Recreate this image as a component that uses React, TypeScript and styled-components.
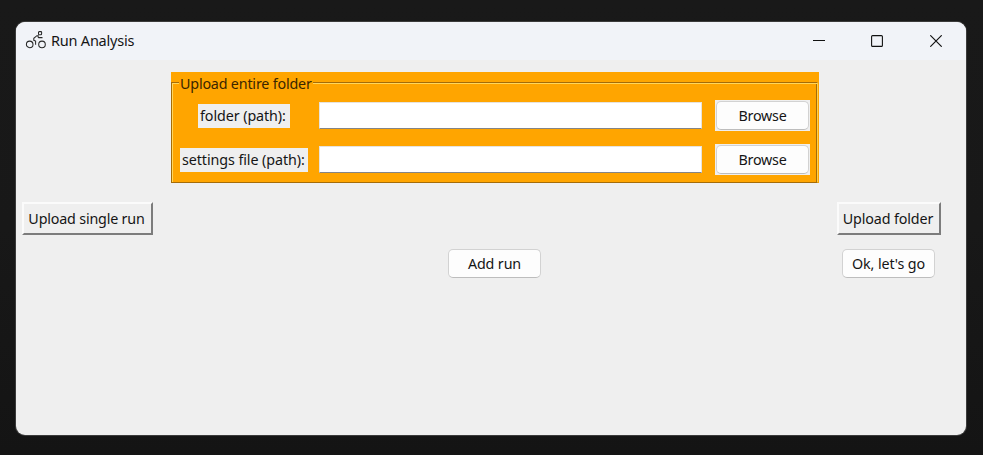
import React from "react";
import styled, { createGlobalStyle } from "styled-components";

const GlobalStyle = createGlobalStyle`
  * { box-sizing: border-box; }
  html, body { margin: 0; height: 100%; background: #181818; overflow: hidden; }
  body, button, input { font-family: "Noto Sans", "Open Sans", sans-serif; font-size: 14.3px; color: #151515; }
`;

const Desktop = styled.div`
  height: 455px;
  width: 983px;
  padding: 22px 17px 20px 16px;
  background: linear-gradient(#191919, #181818 50%, #141414);
`;

const Window = styled.main`
  height: 413px;
  border-radius: 9px;
  background: #efefef;
  overflow: hidden;
  box-shadow: 0 0 0 1px #3b3b3b;
`;

const TitleBar = styled.header`
  height: 38px;
  display: flex;
  align-items: center;
  padding-left: 9px;
  background: #f1f3f8;
`;

const Title = styled.h1`
  margin: 0 auto 2px 4px;
  font-size: 14.5px;
  font-weight: 400;
  line-height: 20px;
`;

const Caption = styled.span<{ $spacing?: number }>`
  display: block;
  white-space: nowrap;
  line-height: 20px;
  letter-spacing: ${(p) => p.$spacing ?? -0.12}px;
`;

const WindowControls = styled.div`
  display: flex;
  padding-right: 18px;
`;

const ControlButton = styled.button<{ $gap?: number }>`
  width: 24px;
  height: 24px;
  margin-right: ${(p) => p.$gap ?? 0}px;
  padding: 0;
  border: 0;
  background: none;
  display: grid;
  place-items: center;
  svg { display: block; }
`;

const Content = styled.div`
  display: grid;
  grid-template-columns: 155px 648px 147px;
  grid-template-rows: 111px 33px 29px;
  padding-top: 12px;
  row-gap: 19px;
`;

const FolderGroup = styled.fieldset`
  grid-column: 2;
  position: relative;
  margin: 0;
  min-width: 0;
  padding: 28px 0 0 9px;
  border: 0;
  background: #ffa500;
  display: grid;
  grid-template-columns: 128px 383px 95px;
  grid-template-rows: 31px 31px;
  column-gap: 12px;
  row-gap: 13px;
  align-items: center;
`;

const Groove = styled.div`
  position: absolute;
  inset: 10px 1px 0 0;
  border: 1px solid #a56c08;
  border-right-color: #ffcf48;
  box-shadow: inset 1px 1px #ffd65c, inset -1px 0 #a56c08;
`;

const GroupTitle = styled.div`
  position: absolute;
  left: 8px;
  top: 2px;
  padding: 0 1px;
  color: #3a2500;
  background: #ffa500;
`;

const FieldLabel = styled.label<{ $width: number }>`
  justify-self: center;
  width: ${(p) => p.$width}px;
  height: 24px;
  padding: 2px 0 2px 2px;
  background: #efefef;
`;

const PathInput = styled.input`
  width: 383px;
  height: 27px;
  margin-left: -1px;
  padding: 2px 4px;
  border: 1px solid #e6e3de;
  border-bottom: 1px solid #858585;
  border-radius: 0;
  background: #fff;
  outline: 0;
`;

const ButtonBacking = styled.div`
  height: 31px;
  padding: 1px;
  background: #efefef;
`;

const RoundButton = styled.button<{ $shift?: number }>`
  width: 93px;
  height: 29px;
  padding: 0;
  border: 1px solid #d2d2d2;
  border-bottom-color: #bdbdbd;
  border-radius: 5px;
  background: #fdfdfd;
  display: grid;
  place-items: center;
  margin-left: ${(p) => p.$shift ?? 0}px;
`;

const RaisedButton = styled.button<{ $width: number; $left: number; $column: number }>`
  grid-row: 2;
  grid-column: ${(p) => p.$column};
  width: ${(p) => p.$width}px;
  margin-left: ${(p) => p.$left}px;
  padding: 0 2px 0 0;
  border: 2px solid;
  border-color: #fbfbfb #7c7c7c #7c7c7c #fbfbfb;
  background: #efefef;
  display: grid;
  place-items: center;
`;

const Actions = styled.div`
  grid-row: 3;
  grid-column: 2 / 4;
  display: flex;
  margin-top: -5px;
`;

const CyclistIcon = () => (
  <svg width="22" height="20" viewBox="0 0 22 20" fill="none" stroke="#292929" strokeWidth="1.05">
    <circle cx="4.7" cy="13.4" r="3.3" />
    <circle cx="17" cy="13.4" r="3.3" />
    <rect x="13.5" y=".6" width="3.1" height="3.1" rx=".7" />
    <path d="M13.8 4.7h-1.9L8.8 7.3v2l1.8.7v3.7M12.7 5.4l1 1.2h3.8" />
  </svg>
);

interface PathRowProps {
  id: string;
  label: string;
  width: number;
}

const PathRow = ({ id, label, width }: PathRowProps) => (
  <>
    <FieldLabel htmlFor={id} $width={width}><Caption $spacing={-0.08}>{label}</Caption></FieldLabel>
    <PathInput id={id} />
    <ButtonBacking>
      <RoundButton><Caption $spacing={-0.2}>Browse</Caption></RoundButton>
    </ButtonBacking>
  </>
);

export default function App() {
  return (
    <Desktop>
      <GlobalStyle />
      <Window>
        <TitleBar>
          <CyclistIcon />
          <Title><Caption $spacing={-0.22}>Run Analysis</Caption></Title>
          <WindowControls>
            <ControlButton aria-label="Minimize" $gap={34}>
              <svg width="12" height="12" stroke="#111"><path d="M0 5.5h12" /></svg>
            </ControlButton>
            <ControlButton aria-label="Maximize" $gap={35}>
              <svg width="12" height="12" fill="none" stroke="#111" strokeWidth="1.1"><rect x=".6" y=".6" width="10.8" height="10.8" rx="1" /></svg>
            </ControlButton>
            <ControlButton aria-label="Close">
              <svg width="12" height="12" stroke="#111" strokeWidth="1.15"><path d="m.3.3 11.4 11.4M11.7.3.3 11.7" /></svg>
            </ControlButton>
          </WindowControls>
        </TitleBar>
        <Content>
          <FolderGroup>
            <Groove />
            <GroupTitle><Caption $spacing={-0.18}>Upload entire folder</Caption></GroupTitle>
            <PathRow id="folder" label="folder (path):" width={92} />
            <PathRow id="settings" label="settings file (path):" width={128} />
          </FolderGroup>
          <RaisedButton $column={1} $width={131} $left={6}><Caption $spacing={-0.18}>Upload single run</Caption></RaisedButton>
          <RaisedButton $column={3} $width={104} $left={18}><Caption>Upload folder</Caption></RaisedButton>
          <Actions>
            <RoundButton $shift={277}><Caption>Add run</Caption></RoundButton>
            <RoundButton $shift={301}><Caption>Ok, let's go</Caption></RoundButton>
          </Actions>
        </Content>
      </Window>
    </Desktop>
  );
}
